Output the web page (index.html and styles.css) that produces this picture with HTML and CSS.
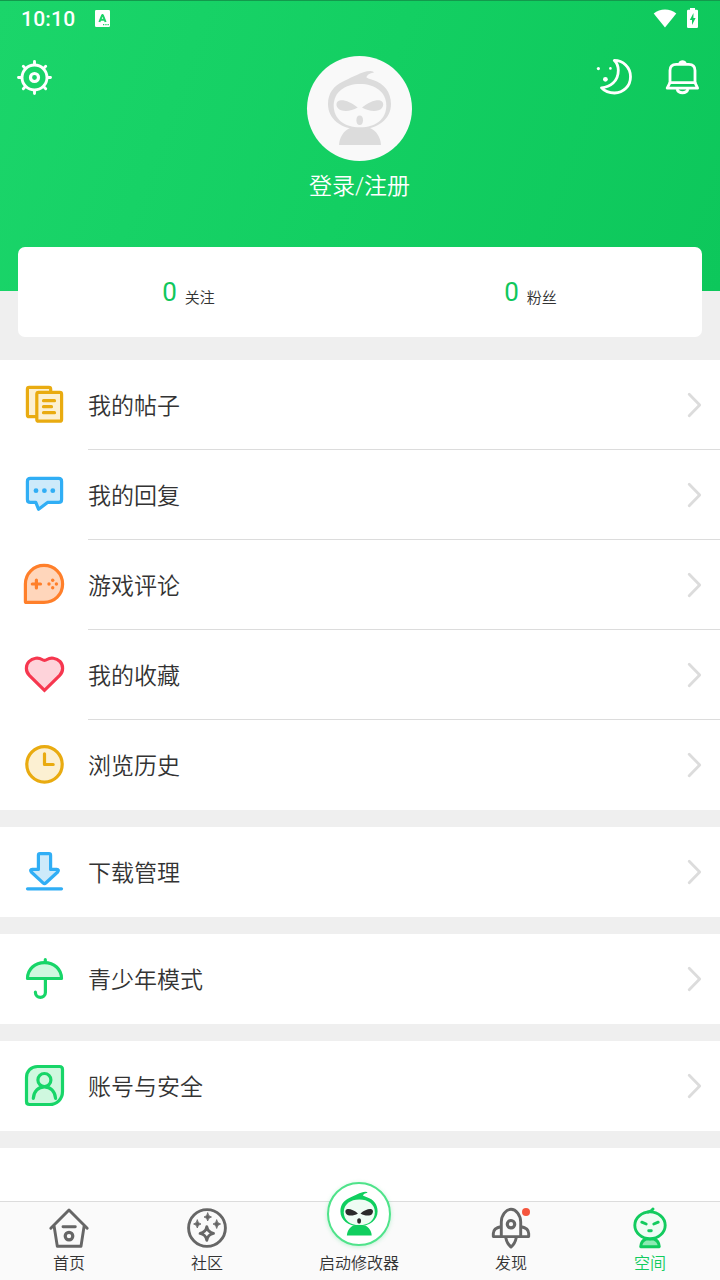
FILE: index.html
```html
<!DOCTYPE html>
<html lang="zh-CN">
<head>
<meta charset="UTF-8">
<title>空间</title>
<link rel="stylesheet" href="styles.css">
</head>
<body>
<!-- 公用图标 -->
<svg class="defs" width="0" height="0">
	<symbol id="arrow" viewBox="0 0 16 26">
		<path d="M3.2 2.2L13.7 12.9L3.2 23.7" fill="none" stroke="#dcdcdc" stroke-width="2.8" stroke-linecap="round" stroke-linejoin="round"/>
	</symbol>
	<symbol id="mask" viewBox="0 0 105 105">
		<path class="hood" d="M52.5 73.3C34 73.3 21 63 21 48C21 37 27 29.5 36 25.5C43 22.5 50 18 60 15.3Q66.5 14.2 67 16.6C62.5 17.6 60 19 59.3 21.3C60.5 22.6 63 23 66 24C77 27.5 84 36 84 48C84 63 71 73.3 52.5 73.3Z"/>
		<path class="cloak" d="M32 89C32.5 81 36.5 75 43 72H63C69.5 75 73.5 81 74 89Z"/>
		<path class="face" d="M53 28C68 28 79.3 36 79.3 49.5C79.3 63 69 71.3 53 71.3C37 71.3 26.7 63 26.7 49.5C26.7 36 38 28 53 28Z"/>
		<path class="eye" d="M50.7 51.6C45 46.5 38 43.8 33.5 44.2C28.5 44.8 28.8 50 31 52.3C34 56 43.5 56 50.7 51.6Z"/>
		<path class="eye" d="M55 51.6C60.7 46.5 67.7 43.8 72.2 44.2C77.2 44.8 76.9 50 74.7 52.3C71.7 56 62.2 56 55 51.6Z"/>
		<ellipse class="eye" cx="52.7" cy="64.3" rx="3.3" ry="4.7"/>
	</symbol>
</svg>

<div class="page">
	<div class="header">
		<div class="status">
			<span class="time">10:10</span>
			<svg class="ime" width="15" height="17" viewBox="0 0 15 17">
				<rect width="15" height="17" rx="1.2" fill="#fff"/>
				<path d="M4.4 12L7.2 5H7.8L10.6 12M5.5 9.8H9.5" fill="none" stroke="#1bd368" stroke-width="2" stroke-linejoin="bevel"/>
				<path d="M8 14.6h1.3M10.3 14.6h1.3M12.5 14.6h1.3" stroke="#1bd368" stroke-width="1.2"/>
			</svg>
			<svg class="wifi" width="24" height="20" viewBox="0 0 24 20">
				<path d="M.7 4.4C7-.9 17-.9 23.3 4.4L12 18.5Z" fill="#fff"/>
			</svg>
			<svg class="battery" width="11" height="20" viewBox="0 0 11 20">
				<path d="M3 0h5v1.8h1.8Q11 1.8 11 3v15.8Q11 20 9.8 20H1.2Q0 20 0 18.8V3Q0 1.8 1.2 1.8H3Z" fill="#fff"/>
				<path d="M6.5 5L2.8 12H5v5L8.6 10H6.4Z" fill="#10c95d"/>
			</svg>
		</div>
		<div class="tools">
			<svg class="gear" width="36" height="36" viewBox="0 0 36 36" fill="none" stroke="#fff" stroke-width="2.9" stroke-linecap="round">
				<circle cx="18.5" cy="18.5" r="12.5"/>
				<circle cx="18.5" cy="18.5" r="4" stroke-width="3.2"/>
				<path d="M18.5 2.5V5.5M18.5 31.5v3M2.5 18.5H5.5M31.5 18.5h3M7.3 7.3L9.2 9.2M27.8 27.8l1.9 1.9M29.7 7.3L27.8 9.2M9.2 27.8l-1.9 1.9"/>
			</svg>
			<svg class="moon" width="38" height="38" viewBox="0 0 38 38">
				<path d="M18.3 2.4C27 2.4 34.5 9 34.5 18.7C34.5 28 27.5 35 18.5 35C12.5 35 8 32.5 5.5 29.8C14 29.2 22.3 23.5 22.3 12.5C22.3 8 20.8 4.7 18.3 2.4Z" fill="none" stroke="#fff" stroke-width="2.8" stroke-linejoin="round"/>
				<circle cx="2.4" cy="10.6" r="1.6" fill="#fff"/>
				<circle cx="14.4" cy="10.4" r="1.3" fill="#fff"/>
				<circle cx="9.4" cy="21.3" r="2.4" fill="#fff"/>
			</svg>
			<svg class="bell" width="36" height="38" viewBox="0 0 36 38" fill="none" stroke="#fff" stroke-width="2.8" stroke-linejoin="round">
				<path d="M6 25V12.5Q6 6.3 12.2 6.3H24.8Q31 6.3 31 12.5V25"/>
				<path d="M6 24.6H31L33.6 30.2H3.2Z"/>
				<path d="M15.7 5.5A3 3 0 0 1 21.3 5.5M13 31C14.5 36 22.5 36 24 31"/>
			</svg>
		</div>
		<div class="user">
			<svg class="avatar"><use href="#mask"/></svg>
			<div class="login">登录/注册</div>
		</div>
	</div>

	<div class="count">
		<div class="count-item"><b>0</b><span>关注</span></div>
		<div class="count-item"><b>0</b><span>粉丝</span></div>
	</div>

	<div class="group">
		<div class="row">
			<svg class="icon yellow" viewBox="0 0 44 44">
				<rect x="5.4" y="4.4" width="23.3" height="29.3" rx="1.8"/>
				<rect x="14.8" y="9.4" width="24.8" height="28.8" rx="1.8"/>
				<path d="M21.5 17.7H32.5M21.5 23.7H29.5M21.5 29.7H32.5"/>
			</svg>
			<div class="text">我的帖子</div>
			<svg class="arrow"><use href="#arrow"/></svg>
		</div>
		<div class="row">
			<svg class="icon blue" viewBox="0 0 44 44">
				<path d="M8.4 5.4H36.6Q39.6 5.4 39.6 8.4V26.4Q39.6 29.4 36.6 29.4H25.5L16.6 36.3L13.8 29.4H8.4Q5.4 29.4 5.4 26.4V8.4Q5.4 5.4 8.4 5.4Z"/>
				<g class="solid"><circle cx="14" cy="17.7" r="2.4"/><circle cx="22.4" cy="17.7" r="2.4"/><circle cx="30.8" cy="17.7" r="2.4"/></g>
			</svg>
			<div class="text">我的回复</div>
			<svg class="arrow"><use href="#arrow"/></svg>
		</div>
		<div class="row">
			<svg class="icon orange" viewBox="0 0 44 44">
				<path d="M22 2.4C32.5 2.4 40.6 10.5 40.6 21C40.6 31.5 32.5 39.4 22 39.4H4.4Q3.4 39.4 3.4 38.4V21C3.4 10.5 11.5 2.4 22 2.4Z"/>
				<path d="M10.3 21H18.5M14.4 17V25"/>
				<g class="solid"><circle cx="30.7" cy="17.3" r="1.7"/><circle cx="30.7" cy="24.7" r="1.7"/><circle cx="27" cy="21" r="1.7"/><circle cx="34.4" cy="21" r="1.7"/></g>
			</svg>
			<div class="text">游戏评论</div>
			<svg class="arrow"><use href="#arrow"/></svg>
		</div>
		<div class="row">
			<svg class="icon red" viewBox="0 0 44 44">
				<path stroke-linejoin="miter" d="M22.5 37.3L7.3 22.3C3.5 18.5 3.4 12.2 7 8.5C10.8 4.7 16.5 4.3 20 6.5Q22.5 8.2 25 6.5C28.5 4.3 34.2 4.7 38 8.5C41.6 12.2 41.5 18.5 37.7 22.3Z"/>
			</svg>
			<div class="text">我的收藏</div>
			<svg class="arrow"><use href="#arrow"/></svg>
		</div>
		<div class="row">
			<svg class="icon yellow" viewBox="0 0 44 44">
				<circle cx="22.5" cy="21.4" r="17.7"/>
				<path d="M22.5 10.8V21.5H31.2" fill="none"/>
			</svg>
			<div class="text">浏览历史</div>
			<svg class="arrow"><use href="#arrow"/></svg>
		</div>
	</div>

	<div class="group">
		<div class="row">
			<svg class="icon blue" viewBox="0 0 44 44">
				<path d="M18 3.7H27Q28.6 3.7 28.6 5.3V19.4H34.6Q37.5 19.6 35.7 22L24 32.8Q22.5 34.2 21 32.8L9.3 22Q7.5 19.6 10.4 19.4H16.4V5.3Q16.4 3.7 18 3.7Z"/>
				<path d="M5.5 38.8H39.5"/>
			</svg>
			<div class="text">下载管理</div>
			<svg class="arrow"><use href="#arrow"/></svg>
		</div>
	</div>

	<div class="group">
		<div class="row">
			<svg class="icon green" viewBox="0 0 44 44">
				<path d="M5.5 21.5C5.5 12 13 5.6 22.5 5.6S39.5 12 39.5 21.5Z"/>
				<path d="M23.3 2.7V5M23.4 21.5V35.5C23.4 42 13.4 42 13.4 35.2" fill="none"/>
			</svg>
			<div class="text">青少年模式</div>
			<svg class="arrow"><use href="#arrow"/></svg>
		</div>
	</div>

	<div class="group">
		<div class="row">
			<svg class="icon green" viewBox="0 0 44 44">
				<path d="M15.5 2.5H37.5Q40.5 2.5 40.5 5.5V27.5C40.5 35 35 40.5 27.5 40.5H7.5Q4.5 40.5 4.5 37.5V13.5C4.5 7 9 2.5 15.5 2.5Z"/>
				<circle cx="22.4" cy="16" r="6.5"/>
				<path d="M11.3 34.3C11.8 27 16.5 22.8 22.4 22.8S33 27 33.6 34.3" fill="none"/>
			</svg>
			<div class="text">账号与安全</div>
			<svg class="arrow"><use href="#arrow"/></svg>
		</div>
	</div>

	<div class="group last"></div>

	<div class="tabbar">
		<div class="tab">
			<svg class="tab-icon" viewBox="0 0 44 44">
				<path d="M3.8 22.3L22 4L40.2 22.3M7 19.5L10.3 40.2H34L37.2 19.5M16 20.7H28.3"/>
				<circle cx="22" cy="30.1" r="3.8" stroke-width="3.2"/>
			</svg>
			<span>首页</span>
		</div>
		<div class="tab">
			<svg class="tab-icon" viewBox="0 0 44 44">
				<circle cx="22" cy="22" r="18.4"/>
				<path class="star" d="M22.7 7Q23.2 10.5 26.5 11Q23.2 11.5 22.7 15Q22.2 11.5 19 11Q22.2 10.5 22.7 7ZM12.3 14Q12.8 17.5 16 18Q12.8 18.5 12.3 22Q11.8 18.5 8.6 18Q11.8 17.5 12.3 14ZM31.7 14Q32.2 17.5 35.6 18Q32.2 18.5 31.7 22.5Q31.2 18.5 28 18Q31.2 17.5 31.7 14Z"/>
				<path d="M21.8 20.8Q22.8 26.3 28.5 27.4Q22.8 28.5 21.8 34.2Q20.8 28.5 15.1 27.4Q20.8 26.3 21.8 20.8Z"/>
			</svg>
			<span>社区</span>
		</div>
		<div class="tab start">
			<div class="start-btn"><svg><use href="#mask"/></svg></div>
			<span>启动修改器</span>
		</div>
		<div class="tab">
			<div class="dot-box">
				<svg class="tab-icon" viewBox="0 0 44 44">
					<path d="M12.3 30.5V16C12.3 9.5 17 3.3 22 3.3S31.7 9.5 31.7 16V30.5M12.3 20.5C7.5 21.5 4.3 24 4.3 27.5V30.6H39.7V27.5C39.7 24 36.5 21.5 31.7 20.5M16.7 31.5Q18 38 22 41Q26 38 27.3 31.5"/>
					<circle cx="22" cy="18.2" r="3.7" stroke-width="3.2"/>
				</svg>
				<i class="dot"></i>
			</div>
			<span>发现</span>
		</div>
		<div class="tab active">
			<svg class="tab-icon" viewBox="0 0 44 44">
				<path d="M12.7 40.7C13 37 15 34 18 33H26C29 34 31 37 31.3 40.7Z" fill="#8eeab4"/>
				<ellipse cx="22" cy="19.3" rx="15.2" ry="13.4" fill="#effcf4"/>
				<path d="M20 6Q23.5 5.5 25 3" stroke-width="3"/>
				<path d="M13.8 16.2L18.2 18M30.2 16.2L25.8 18M20.7 24.7H23.3"/>
			</svg>
			<span>空间</span>
		</div>
	</div>
</div>
</body>
</html>
```

FILE: styles.css
```css
*{margin:0;padding:0;box-sizing:border-box}
body{background:#efefef;font-family:Roboto,"Noto Sans CJK SC",sans-serif;font-weight:350;color:#333}
svg{display:block;flex:none}
.defs{position:absolute}
.page{display:flex;flex-direction:column;width:720px;height:1280px;overflow:hidden;position:relative}

/* 顶部 */
.header{flex:none;height:291px;background:linear-gradient(110deg,#1bd56a 0%,#13cf62 50%,#0dc75b 100%);border-top:1px solid #13994c;color:#fff}
.status{display:flex;align-items:center;height:35px;padding:0 22px 0 21px}
.time{width:55px;font-size:21px;font-weight:500;letter-spacing:.2px}
.ime{margin-left:19px}
.wifi{margin-left:auto}
.battery{margin:-2px 0 0 10px}
.tools{display:flex;align-items:center;height:83px;padding:0 19px 2px 16px}
.moon{margin-left:auto}
.bell{margin-left:30px;margin-right:1px}
.user{display:flex;flex-direction:column;align-items:center;margin-top:-63px}
.avatar{width:105px;height:105px;border-radius:50%;background:#f9f9f9;color:#dcdcdc;margin-right:1px}
.login{margin-top:9px;margin-right:1px;font-size:23px;line-height:34px}

.hood,.cloak{fill:currentColor}
.eye{fill:var(--eye,currentColor)}
.face{fill:var(--face,#f9f9f9)}

/* 关注 粉丝 */
.count{flex:none;display:flex;height:90px;margin:-44px 18px 23px;background:#fff;border-radius:7px}
.count-item{flex:1;display:flex;justify-content:center;align-items:flex-start;padding:30px 1px 0 0}
.count-item b{font-size:26px;line-height:30px;font-weight:400;color:#10c75c}
.count-item span{margin:9px 0 0 8px;font-size:15px;line-height:24px}

/* 列表 */
.group{flex:none;background:#fff;margin-bottom:17px}
.row{display:flex;align-items:center;height:90px;padding-left:22px;position:relative}
.text{flex:1;display:flex;align-items:center;height:90px;margin-left:22px;padding-bottom:1px;font-size:23px;border-bottom:1px solid #dcdcdc}
.arrow{position:absolute;right:18px;width:16px;height:26px}
.row:last-child .text{border-bottom-color:transparent}
.last{height:60px;margin:0}

.icon{width:44px;height:44px;stroke:currentColor;stroke-width:3.2;stroke-linecap:round;stroke-linejoin:round}
.solid{fill:currentColor;stroke:none}
.yellow{color:#e9ab10;fill:#fcf0d2}
.blue{color:#30aef5;fill:#cdeafa}
.orange{color:#ff7f2a;fill:#ffd6bb}
.red{color:#f6374f;fill:#fed3da}
.green{color:#17d568;fill:#cff8df}

/* 底部导航 */
.tabbar{position:absolute;left:0;bottom:0;display:grid;grid-template-columns:138px 138px 166px 138px 140px;grid-template-rows:78px;width:720px;height:79px;background:#fafafa;border-top:1px solid #dcdcdc}
.tab{display:flex;flex-direction:column;align-items:center;justify-content:flex-end;padding-bottom:4px;font-size:16px;line-height:25px}
.tab-icon{width:44px;height:44px;margin-bottom:1px;fill:none;stroke:#666;stroke-width:2.9;stroke-linecap:round;stroke-linejoin:round}
.tab-icon .star{fill:#666;stroke:#666;stroke-width:.8}
.active{color:#12cb5e}
.active .tab-icon{stroke:#12cb5e}
.start-btn{--eye:#2b2b2b;--face:#effcf4;width:64px;height:64px;margin-bottom:5px;margin-right:1px;border:2px solid #4fe38a;border-radius:50%;background:#fff;box-shadow:0 1px 4px rgba(20,210,100,.25)}
.start-btn svg{width:62px;height:62px;margin:-1px;color:#10cf5f}
.dot-box{position:relative}
.dot{position:absolute;left:33px;top:2px;width:8px;height:8px;border-radius:50%;background:#f5553d}
```
